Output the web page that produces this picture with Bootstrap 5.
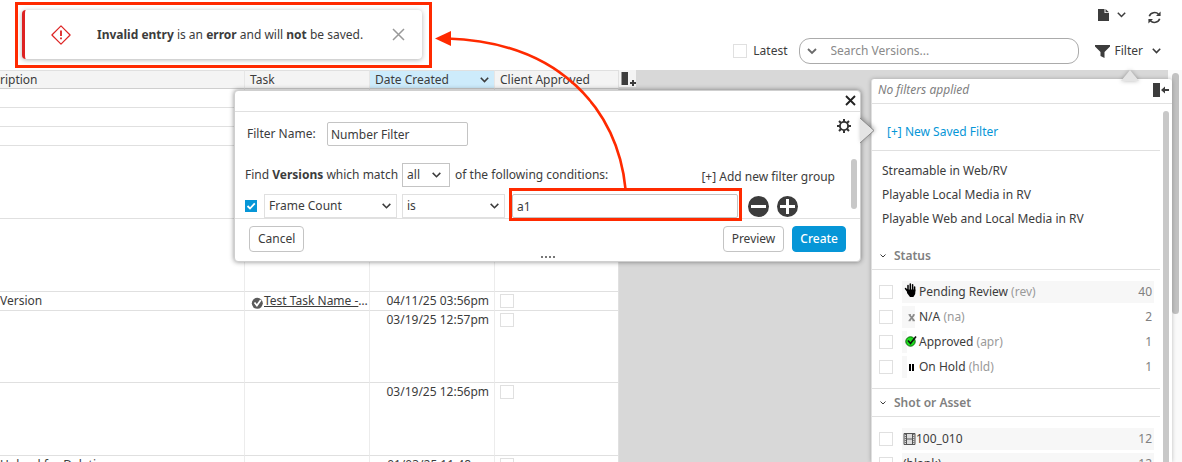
<!DOCTYPE html>
<html lang="en">
<head>
<meta charset="utf-8">
<meta name="viewport" content="width=device-width, initial-scale=1">
<title>Versions</title>
<link href="https://cdn.jsdelivr.net/npm/bootstrap@5.3.0/dist/css/bootstrap.min.css" rel="stylesheet">
<style>
  :root { --ink:#3c3c3c; --line:#e0e0e0; --soft:#808080; --blue:#0696d7; --callout:#ff2a00; }
  body { font-family:"Noto Sans",sans-serif; font-size:12px; line-height:18px; color:var(--ink); height:100vh; overflow:hidden; }
  button { color:inherit; }
  svg { display:block; flex:none; }
  .tick { appearance:none; width:14px; height:14px; margin:0; border:1px solid var(--line); background:#fff; flex:none; display:block; border-radius:0; }
  .tick:checked { width:12px; height:12px; border:0; background:var(--blue) url("data:image/svg+xml,%3Csvg xmlns='http://www.w3.org/2000/svg' viewBox='0 0 12 12'%3E%3Cpath d='M2.5 6l2.500 2.500L9.800 3.400' fill='none' stroke='white' stroke-width='1.800'/%3E%3C/svg%3E"); }

  /* top bar */
  .topbar { height:70px; padding:5px 21px 0 0; flex:none; }
  .topbar .tools { height:20px; gap:22px; }
  .topbar .finder { height:26px; margin-top:13px; }
  .latest-label { margin:0 11px 0 6px; }
  .search-box { width:280px; height:26px; border:1px solid #ababab; border-radius:11px; padding:0 8px 0 7px; }
  .search-box input { border:0; outline:0; padding:0; margin-left:14px; color:var(--ink); background:none; }
  .search-box input::placeholder { color:#8a8a8a; opacity:1; }
  .filter-btn { margin-left:16px; gap:5px; }
  .filter-btn span { margin-right:4px; }

  /* versions grid */
  .stage { background:#d8d8d8; min-height:0; }
  .versions { width:619px; table-layout:fixed; border-collapse:separate; border-spacing:0; background:#fff; flex:none; align-self:flex-start; }
  .versions th { height:19px; line-height:17px; padding:0 5px; font-weight:400; background:#f4f4f4; border-top:1px solid var(--line); border-bottom:1px solid #cfcfcf; border-right:1px solid #e6e6e6; white-space:nowrap; }
  .versions th.sorted { background:#cdebfb; }
  .versions td { padding:0 5px; vertical-align:top; border-bottom:1px solid var(--line); border-right:1px solid #ececec; white-space:nowrap; overflow:hidden; line-height:18px; }
  .versions td:last-child, .versions th:last-child { border-right-color:var(--line); }
  .versions td:first-child, .versions th:first-child { padding-left:0; }
  .r-sm td { height:19px; } .r-lg td { height:73px; } .r-md td { height:72px; }
  .versions .tick { margin-top:2px; }
  .versions td.task-cell { padding:0 0 0 6px; }
  .task-link { color:var(--ink); }
  .add-col { width:17px; height:17px; background:#f4f4f4; border:0; padding:0; }
  .page-scroll { width:14px; background:#fafafa; padding:3px 4px 0; }
  .page-scroll div { height:241px; border-radius:4px; background:#c1c1c1; width:7px; }

  /* filter panel */
  .filter-panel { position:absolute; top:79px; right:10px; bottom:0; width:301px; background:#fff; border-left:1px solid var(--line); border-radius:3px 3px 0 0; box-shadow:0 0 4px rgba(0,0,0,.25); }
  .panel-tip { position:absolute; top:-9px; right:33px; filter:drop-shadow(0 0 2px rgba(0,0,0,.3)); }
  .panel-head { height:25px; padding:0 3px 2px 6px; border-bottom:1px solid var(--line); color:var(--soft); }
  .panel-list { width:288px; }
  .panel-scroll { position:absolute; top:32px; right:3px; bottom:0; width:6px; border-radius:3px 3px 0 0; background:#c8c8c8; }
  .saved-new { height:47px; padding:10px 0 0 15px; border-bottom:1px solid var(--line); }
  .saved-new a { color:var(--blue); }
  .saved { padding:8px 0 11px 10px; }
  .saved a { display:block; line-height:24px; color:var(--ink); }
  .facet-head { height:28px; padding-left:8px; border-bottom:1px solid var(--line); color:var(--soft); }
  .facet-head button { font-weight:600; gap:8px; }
  .facet { padding:11px 6px 10px 7px; border-bottom:1px solid var(--line); display:grid; gap:3px; }
  .facet-row { height:22px; gap:9px; }
  .facet-bar { height:22px; padding:0 2px 0 1px; background:linear-gradient(#f7f7f7,#f7f7f7) no-repeat 0 0 / var(--share,100%) 100%; }
  .facet-bar .glyph { width:16px; }
  .code { color:#9a9a9a; }
  .tally { color:var(--soft); }

  /* filter dialog */
  .dialog { position:absolute; top:90px; left:234px; width:627px; background:#fff; border:1px solid #cfcfcf; border-radius:4px; box-shadow:0 0 5px rgba(0,0,0,.45); }
  .dialog-tip { position:absolute; top:26px; left:625px; filter:drop-shadow(1px -1px 2px rgba(0,0,0,.3)); }
  .dialog-top { height:21px; border-bottom:1px solid var(--line); padding:0 4px 2px; }
  .name-row { height:44px; padding:0 9px 0 12px; }
  .name-row label { width:80px; }
  .name-row .field { width:141px; }
  .field { border:1px solid #c4c4c4; border-radius:2px; padding:0 3px; font-size:12px; color:var(--ink); height:24px; outline:0; }
  .cond { padding:7px 25px 0 10px; height:62px; }
  .cond-line { height:24px; }
  .cond-line + .cond-line { margin-top:7px; }
  .pick { appearance:none; height:24px; border:1px solid var(--line); border-radius:0; padding:0 18px 0 4px; font-size:12px; line-height:18px; color:var(--ink); background:#fff url("data:image/svg+xml,%3Csvg xmlns='http://www.w3.org/2000/svg' viewBox='0 0 8 5'%3E%3Cpath d='M.6.6L4 4 7.400.6' fill='none' stroke='%233c3c3c' stroke-width='1.400'/%3E%3C/svg%3E") no-repeat right 5px center / 9px 6px; }
  .pick-all { border-color:#c4c4c4; width:48px; background-position:right 8px center; margin:0 5px 0 4px; }
  .pick-field { width:133px; margin:0 5px 0 7px; }
  .pick-op { width:103px; }
  .marked { position:relative; margin:0 10px 0 7px; }
  .marked .field { width:226px; padding-left:4px; }
  .marked::after { content:""; position:absolute; inset:-6px -4px -3px -3px; border:3px solid var(--callout); pointer-events:none; }
  .dialog-foot { height:43px; border-top:1px solid var(--line); padding:7px 14px 0; }
  .act { height:26px; border:1px solid #c4c4c4; border-radius:4px; background:#fff; padding:0 8px; line-height:18px; }
  .act-main { background:var(--blue); border-color:var(--blue); color:#fff; padding:0 7px; font-weight:500; }
  .grip { position:absolute; left:306px; bottom:3px; gap:2px; }
  .grip i { width:2px; height:2px; background:#777; }
  .dialog-scroll { position:absolute; right:3px; top:68px; width:6px; height:50px; border-radius:3px; background:#c8c8c8; }

  /* error toast with its call-out */
  .callout-box { position:absolute; top:2px; left:15px; width:417px; height:66px; border:3px solid var(--callout); padding:5px 7px 6px 4px; background:#fff; }
  .notice { height:49px; border-left:3px solid #dd2222; border-radius:4px; box-shadow:0 1px 5px rgba(0,0,0,.3); padding:0 17px 0 26px; }
  .notice span { margin-left:26px; }
  .callout-arrow { position:absolute; top:0; left:430px; pointer-events:none; }
</style>
</head>
<body class="d-flex flex-column position-relative">

<header class="topbar d-flex flex-column align-items-end">
  <div class="tools d-flex align-items-center">
    <button class="border-0 bg-transparent p-0 d-flex align-items-center gap-2" aria-label="Pages">
      <svg width="11" height="12" viewBox="0 0 11 12"><path d="M0 0h6.500v4H11v8H0zM7.500 0L11 3.200H7.500z" fill="#3c3c3c"/></svg>
      <svg width="9" height="6" viewBox="0 0 9 6"><path d="M.8.8l3.700 3.700L8.200.8" fill="none" stroke="#3c3c3c" stroke-width="1.500"/></svg>
    </button>
    <button class="border-0 bg-transparent p-0 pt-1" aria-label="Refresh">
      <svg width="13" height="13" viewBox="0 0 13 13" fill="none" stroke="#3c3c3c" stroke-width="1.600"><path d="M1.300 5.200C2.600 1.300 8 .4 10.500 3.200M11.700 7.800C10.400 11.700 5 12.600 2.500 9.800"/><path d="M12.600.4v4.700H8zM.4 12.600V7.900H5z" fill="#3c3c3c" stroke="none"/></svg>
    </button>
  </div>
  <div class="finder d-flex align-items-center">
    <input class="tick" type="checkbox" id="latest"><label class="latest-label" for="latest">Latest</label>
    <div class="search-box d-flex align-items-center">
      <svg width="10" height="7" viewBox="0 0 10 7"><path d="M1 1l4 4 4-4" fill="none" stroke="#6a6a6a" stroke-width="1.800"/></svg>
      <input class="flex-fill" type="text" placeholder="Search Versions..." aria-label="Search Versions">
    </div>
    <button class="filter-btn border-0 bg-transparent p-0 d-flex align-items-center">
      <svg width="15" height="13" viewBox="0 0 15 13"><path d="M0 0h15v1.500L9.500 7v6L5.500 11V7L0 1.500z" fill="#3c3c3c"/></svg>
      <span>Filter</span>
      <svg width="9" height="6" viewBox="0 0 9 6"><path d="M.8.8l3.700 3.700L8.200.8" fill="none" stroke="#3c3c3c" stroke-width="1.600"/></svg>
    </button>
  </div>
</header>

<main class="stage d-flex flex-fill overflow-hidden">
  <table class="versions">
    <colgroup><col style="width:245px"><col style="width:125px"><col style="width:125px"><col style="width:124px"></colgroup>
    <thead><tr>
      <th>ription</th><th>Task</th>
      <th class="sorted"><div class="d-flex align-items-center justify-content-between">Date Created
        <svg class="me-n1" width="9" height="6" viewBox="0 0 9 6"><path d="M.8.8l3.700 3.700L8.200.8" fill="none" stroke="#3c3c3c" stroke-width="1.600"/></svg></div></th>
      <th>Client Approved</th>
    </tr></thead>
    <tbody>
      <tr class="r-sm"><td></td><td></td><td></td><td></td></tr>
      <tr class="r-sm"><td></td><td></td><td></td><td></td></tr>
      <tr class="r-sm"><td></td><td></td><td></td><td></td></tr>
      <tr class="r-lg"><td></td><td></td><td></td><td></td></tr>
      <tr class="r-lg"><td></td><td></td><td></td><td></td></tr>
      <tr class="r-sm"><td>Version</td>
        <td class="task-cell"><div class="d-flex align-items-center">
          <svg class="mt-1" width="13" height="12" viewBox="0 0 13 12"><circle cx="6.300" cy="6.300" r="5.500" fill="#5a5a5a"/><path d="M3.500 5.500l2.400 3L9.800 3" fill="none" stroke="#fff" stroke-width="1.800"/></svg>
          <a class="task-link" href="#">Test Task Name -</a>…</div></td>
        <td class="text-end">04/11/25 03:56pm</td><td><input class="tick" type="checkbox" aria-label="Client approved"></td></tr>
      <tr class="r-md"><td></td><td></td><td class="text-end">03/19/25 12:57pm</td><td><input class="tick" type="checkbox" aria-label="Client approved"></td></tr>
      <tr class="r-lg"><td></td><td></td><td class="text-end">03/19/25 12:56pm</td><td><input class="tick" type="checkbox" aria-label="Client approved"></td></tr>
      <tr class="r-lg"><td>Upload for Deletion</td><td></td><td class="text-end">01/03/25 11:48am</td><td><input class="tick" type="checkbox" aria-label="Client approved"></td></tr>
    </tbody>
  </table>
  <button class="add-col align-self-start" aria-label="Add column">
    <svg width="17" height="17" viewBox="0 0 17 17" fill="#3c3c3c"><path d="M2.500 2h6.500v13H2.500zM11 12h2v-2h2v2h2v2h-2v2h-2v-2h-2z"/></svg>
  </button>
  <div class="page-scroll ms-auto"><div></div></div>
</main>

<aside class="filter-panel">
  <svg class="panel-tip" width="18" height="11" viewBox="0 0 18 11"><path d="M0 11L9 0l9 11z" fill="#e4e4e4"/></svg>
  <div class="panel-head d-flex align-items-center justify-content-between">
    <em>No filters applied</em>
    <button class="border-0 bg-transparent p-0" aria-label="Pin panel"><svg width="17" height="14" viewBox="0 0 17 14" fill="#3c3c3c"><path d="M1 0h7v14H1zM9 7l4-3.600V6h4v2h-4v2.600z"/></svg></button>
  </div>
  <div class="panel-list">
    <div class="saved-new d-flex align-items-center"><a class="text-decoration-none" href="#">[+] New Saved Filter</a></div>
    <nav class="saved">
      <a class="text-decoration-none" href="#">Streamable in Web/RV</a>
      <a class="text-decoration-none" href="#">Playable Local Media in RV</a>
      <a class="text-decoration-none" href="#">Playable Web and Local Media in RV</a>
    </nav>
    <div class="facet-head d-flex align-items-center"><button class="border-0 bg-transparent p-0 d-flex align-items-center"><svg width="6" height="4" viewBox="0 0 6 4"><path d="M.5.500L3 3 5.500.5" fill="none" stroke="#3c3c3c"/></svg>Status</button></div>
    <div class="facet">
      <div class="facet-row d-flex align-items-center"><input class="tick" type="checkbox" id="rev"><label for="rev" class="facet-bar d-flex flex-fill align-items-center"><span class="glyph pb-1"><svg width="15" height="15" viewBox="0 0 15 15"><path d="M5 8V2.500M7.300 7.500V1M9.600 7.500V1.800M11.600 8V4M2.500 5.500L5.500 9.500" stroke="#000" stroke-width="1.500" stroke-linecap="round"/><path d="M4.200 6.500h8.200l-.2 4.500-1.800 3H7L4 10z"/></svg></span><span>Pending Review <span class="code">(rev)</span></span><span class="tally ms-auto">40</span></label></div>
      <div class="facet-row d-flex align-items-center"><input class="tick" type="checkbox" id="na"><label for="na" class="facet-bar d-flex flex-fill align-items-center" style="--share:13px"><span class="glyph"><svg width="15" height="12" viewBox="0 0 15 12"><path d="M6.500 4l4.500 5.500M11 4L6.500 9.500" stroke="#888" stroke-width="1.800"/><path d="M5.500 3.700h2.500M9.800 3.700h2M5.500 9.700h2M9.500 9.700h2.500" stroke="#888"/></svg></span><span>N/A <span class="code">(na)</span></span><span class="tally ms-auto">2</span></label></div>
      <div class="facet-row d-flex align-items-center"><input class="tick" type="checkbox" id="apr"><label for="apr" class="facet-bar d-flex flex-fill align-items-center" style="--share:5px"><span class="glyph pb-1"><svg width="15" height="13" viewBox="0 0 15 13"><circle cx="7.500" cy="7.500" r="4.700" fill="#1de01d" stroke="#0a6a0a"/><path d="M5 6.500l2.500 3L13 2.500" fill="none" stroke="#111" stroke-width="1.700"/></svg></span><span>Approved <span class="code">(apr)</span></span><span class="tally ms-auto">1</span></label></div>
      <div class="facet-row d-flex align-items-center"><input class="tick" type="checkbox" id="hld"><label for="hld" class="facet-bar d-flex flex-fill align-items-center" style="--share:5px"><span class="glyph"><svg width="15" height="12" viewBox="0 0 15 12"><path d="M6 3h2v7H6zM9 3h2v7H9z"/></svg></span><span>On Hold <span class="code">(hld)</span></span><span class="tally ms-auto">1</span></label></div>
    </div>
    <div class="facet-head d-flex align-items-center"><button class="border-0 bg-transparent p-0 d-flex align-items-center"><svg width="6" height="4" viewBox="0 0 6 4"><path d="M.5.500L3 3 5.500.5" fill="none" stroke="#3c3c3c"/></svg>Shot or Asset</button></div>
    <div class="facet">
      <div class="facet-row d-flex align-items-center"><input class="tick" type="checkbox" id="s1"><label for="s1" class="facet-bar d-flex flex-fill align-items-center"><svg width="13" height="12" viewBox="0 0 13 12"><path d="M1 .5h11v11H1zM3.500 0v12M9.500 0v12M3.500 6h6" fill="#ddd" stroke="#555"/><path d="M2.300 1v11M10.800 1v11" stroke="#555" stroke-dasharray="1 1"/></svg><span>100_010</span><span class="tally ms-auto">12</span></label></div>
      <div class="facet-row d-flex align-items-center"><input class="tick" type="checkbox" id="s2"><label for="s2" class="facet-bar d-flex flex-fill align-items-center"><span>(blank)</span><span class="tally ms-auto">12</span></label></div>
    </div>
  </div>
  <div class="panel-scroll"></div>
</aside>

<section class="dialog" role="dialog" aria-label="Filter">
  <svg class="dialog-tip" width="15" height="27" viewBox="0 0 15 27"><path d="M0 1l14 12.500L0 26z" fill="#e4e4e4"/><path d="M0 1l14 12.500L0 26" fill="none" stroke="#8a8a8a"/></svg>
  <div class="dialog-top d-flex align-items-center justify-content-end">
    <button class="border-0 bg-transparent p-0" aria-label="Close"><svg width="11" height="11" viewBox="0 0 11 11"><path d="M1 1l9 9M10 1l-9 9" stroke="#222" stroke-width="1.900"/></svg></button>
  </div>
  <div class="name-row d-flex align-items-center">
    <label for="fname">Filter Name:</label>
    <input class="field" id="fname" type="text" value="Number Filter">
    <button class="border-0 bg-transparent p-0 ms-auto pb-3" aria-label="Settings"><svg width="14" height="14" viewBox="0 0 14 14" fill="none" stroke="#333"><circle cx="7" cy="7" r="4.100" stroke-width="1.900"/><path d="M7 0v3M7 11v3M0 7h3M11 7h3M2 2l2 2M10 10l2 2M12 2l-2 2M4 10l-2 2" stroke-width="2"/></svg></button>
  </div>
  <div class="cond">
    <div class="cond-line d-flex align-items-center">
      <label for="match">Find <b>Versions</b> which match</label>
      <select class="pick pick-all" id="match"><option>all</option></select>
      <span>of the following conditions:</span>
      <button class="border-0 bg-transparent p-0 pt-1 ms-auto">[+] Add new filter group</button>
    </div>
    <div class="cond-line d-flex align-items-center">
      <input class="tick" type="checkbox" checked aria-label="Use condition">
      <select class="pick pick-field" aria-label="Field"><option>Frame Count</option></select>
      <select class="pick pick-op" aria-label="Operator"><option>is</option></select>
      <div class="marked"><input class="field d-block" type="text" value="a1" aria-label="Value"></div>
      <div class="d-flex gap-2">
        <button class="border-0 bg-transparent p-0" aria-label="Remove condition"><svg width="21" height="21" viewBox="0 0 21 21"><circle cx="10.500" cy="10.500" r="10.500" fill="#3c3c3c"/><path d="M3 10.500h15" stroke="#fff" stroke-width="3"/></svg></button>
        <button class="border-0 bg-transparent p-0" aria-label="Add condition"><svg width="21" height="21" viewBox="0 0 21 21"><circle cx="10.500" cy="10.500" r="10.500" fill="#3c3c3c"/><path d="M3 10.500h15M10.500 3v15" stroke="#fff" stroke-width="3"/></svg></button>
      </div>
    </div>
  </div>
  <div class="dialog-foot d-flex align-items-start">
    <button class="act">Cancel</button>
    <button class="act ms-auto">Preview</button>
    <button class="act act-main ms-2">Create</button>
  </div>
  <div class="grip d-flex"><i></i><i></i><i></i><i></i></div>
  <div class="dialog-scroll"></div>
</section>

<div class="callout-box">
  <div class="notice d-flex align-items-center bg-white" role="alert">
    <svg width="20" height="20" viewBox="0 0 20 20"><path d="M10 .9l9.100 9.100-9.100 9.100L.9 10z" fill="none" stroke="#dd2222" stroke-width="1.200" stroke-linejoin="round"/><path d="M9.100 5.500h1.800v5.500H9.100zM9.100 12.500h1.800v1.800H9.100z" fill="#dd2222"/></svg>
    <span><b>Invalid entry</b> is an <b>error</b> and will <b>not</b> be saved.</span>
    <button class="border-0 bg-transparent p-0 ms-auto" aria-label="Dismiss"><svg width="13" height="13" viewBox="0 0 13 13"><path d="M1 1l11 11M12 1L1 12" stroke="#999" stroke-width="1.500"/></svg></button>
  </div>
</div>
<svg class="callout-arrow" width="200" height="190" viewBox="430 0 200 190"><path d="M625.500 189C618 110 560 42 447 38.500" fill="none" stroke="#ff2a00" stroke-width="2.600"/><path d="M435 38.500l16-7.500v15z" fill="#ff2a00"/></svg>

<script src="https://cdn.jsdelivr.net/npm/bootstrap@5.3.0/dist/js/bootstrap.bundle.min.js"></script>
</body>
</html>
